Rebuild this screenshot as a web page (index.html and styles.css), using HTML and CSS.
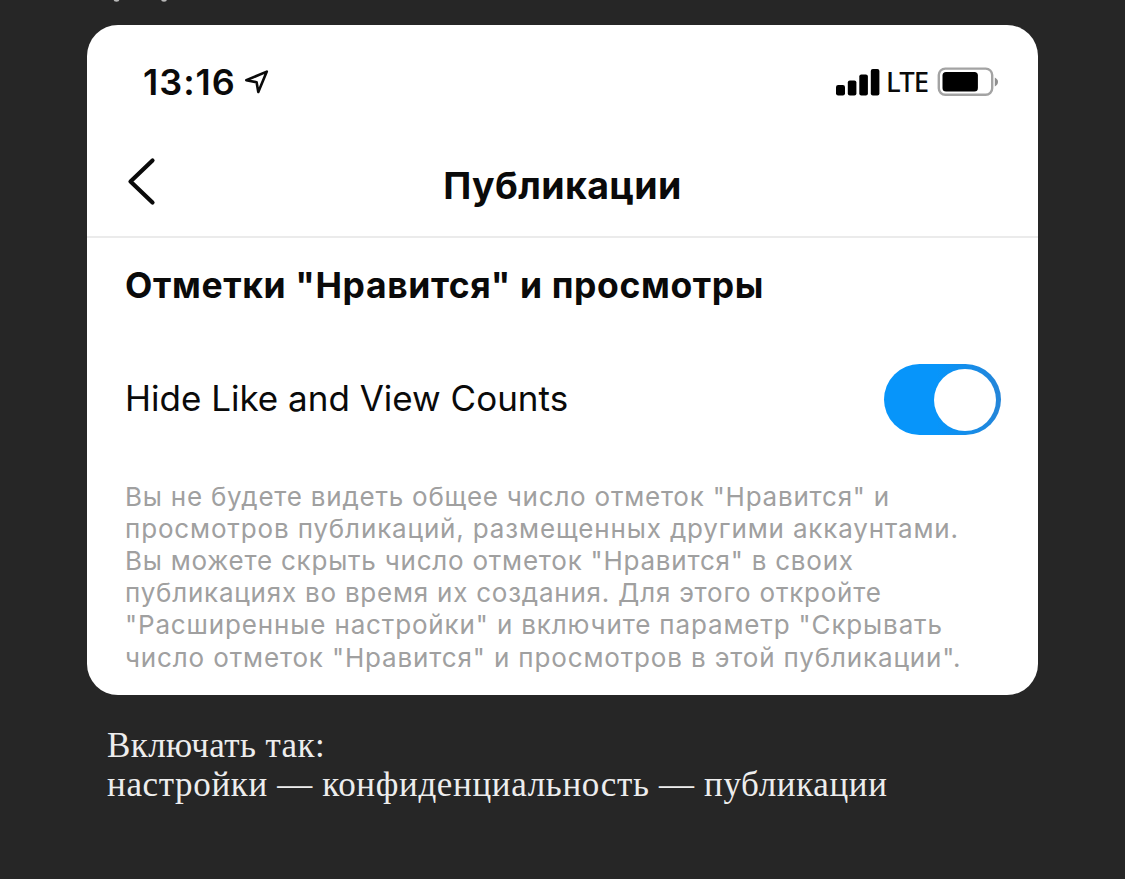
FILE: index.html
```
<!DOCTYPE html>
<html lang="ru">

<head>
    <meta charset="UTF-8">
    <meta name="viewport" content="width=device-width, initial-scale=1.0">
    <title>Публикации</title>
    <link rel="stylesheet" href="styles.css">
</head>

<body>
    <svg class="marks" viewBox="0 0 60 4">
        <ellipse cx="6.5" cy="0" rx="2.8" ry="1.8" />
        <ellipse cx="54" cy="0" rx="2.8" ry="1.8" />
    </svg>

    <main class="card">
        <div class="status">
            <span class="time">13:16</span>
            <svg class="location" viewBox="0 0 26 26">
                <path d="M2.3 11.2 L22.8 2.6 L14.3 23 L12.6 13.2 Z" />
            </svg>
            <svg class="signal" viewBox="0 0 44 28">
                <rect x="0" y="17" width="9" height="10.5" rx="2.2" />
                <rect x="11.8" y="12.6" width="8.6" height="14.9" rx="2" />
                <rect x="23.3" y="6.6" width="8.6" height="20.9" rx="2" />
                <rect x="34.8" y="1" width="8.6" height="26.5" rx="2" />
            </svg>
            <span class="network">LTE</span>
            <svg class="battery" viewBox="0 0 62 30">
                <rect class="battery-case" x="1.8" y="1.6" width="53.4" height="26.2" rx="6.5" />
                <rect x="5.5" y="5" width="35.4" height="19.4" rx="3.5" />
                <path class="battery-tip" d="M57.8 10.6 Q61 12.2 61 15 Q61 17.8 57.8 19.4 Z" />
            </svg>
        </div>

        <header class="navbar">
            <svg class="back" viewBox="0 0 30 50">
                <path d="M25.5 3.5 L3.5 24.5 L25.5 45.5" />
            </svg>
            <h1 class="title">Публикации</h1>
        </header>

        <section class="settings">
            <h2 class="subtitle">Отметки "Нравится" и просмотры</h2>
            <div class="option">
                <span class="option-name">Hide Like and View Counts</span>
                <span class="switch"><span class="knob"></span></span>
            </div>
            <p class="hint">
                Вы не будете видеть общее число отметок "Нравится" и<br>
                <span class="wide">просмотров публикаций, размещенных другими аккаунтами.</span><br>
                Вы можете скрыть число отметок "Нравится" в своих<br>
                публикациях во время их создания. Для этого откройте<br>
                <span class="wide">"Расширенные настройки" и включите параметр "Скрывать</span><br>
                <span class="wide">число отметок "Нравится" и просмотров в этой публикации".</span>
            </p>
        </section>
    </main>

    <p class="caption">
        Включать так:<br>
        <span class="path">настройки — конфиденциальность — публикации</span>
    </p>
</body>

</html>
```

FILE: styles.css
```
* {
    box-sizing: border-box;
}

body {
    margin: 0;
    height: 879px;
    overflow: hidden;
    background: #262626;
    font-family: Inter, "Liberation Sans", sans-serif;
    color: #0a0a0a;
}

.marks {
    display: block;
    width: 60px;
    height: 4px;
    margin-left: 110px;
    fill: #b8b8b8;
}

.card {
    width: 951px;
    height: 670.5px;
    margin: 20.5px 0 0 87px;
    border-radius: 31px;
    background: #fff;
    white-space: nowrap;
}

.status {
    display: flex;
    align-items: center;
    height: 114px;
    padding: 0 39px 0 56px;
}

.time {
    font-size: 36px;
    font-weight: 600;
    letter-spacing: 1px;
}

.location {
    width: 26px;
    height: 26px;
    margin-left: 8.5px;
    fill: none;
    stroke: #0a0a0a;
    stroke-width: 2.6;
    stroke-linejoin: round;
}

.signal {
    width: 44px;
    height: 28px;
    margin-left: auto;
    fill: #000;
}

.network {
    margin-left: 6px;
    font-family: "Noto Sans", sans-serif;
    font-size: 27.5px;
    font-weight: 500;
    letter-spacing: -1px;
}

.battery {
    width: 62px;
    height: 30px;
    margin-left: 9px;
}

.battery-case {
    fill: none;
    stroke: #a3a3a3;
    stroke-width: 2.4;
}

.battery-tip {
    fill: #8f8f8f;
}

.navbar {
    display: grid;
    grid-template-columns: 110px 1fr 110px;
    align-items: center;
    height: 99px;
    border-bottom: 2px solid #ebebeb;
}

.back {
    width: 30px;
    height: 50px;
    margin: -10px 0 0 40px;
    fill: none;
    stroke: #0a0a0a;
    stroke-width: 4.2;
    stroke-linecap: round;
    stroke-linejoin: round;
}

.title {
    margin: -4px 0 0;
    text-align: center;
    font-size: 37.5px;
    font-weight: 700;
    letter-spacing: 0.35px;
}

.settings {
    padding: 23px 37px 0 38px;
}

.subtitle {
    margin: 0;
    font-size: 35.5px;
    line-height: 49px;
    font-weight: 700;
    letter-spacing: 0.62px;
}

.option {
    display: flex;
    align-items: center;
    justify-content: space-between;
    height: 72px;
    margin-top: 54px;
}

.option-name {
    padding-bottom: 4px;
    font-size: 35px;
}

.switch {
    display: flex;
    justify-content: flex-end;
    width: 117px;
    height: 71px;
    padding: 4.5px 5px;
    border-radius: 36px;
    background: linear-gradient(90deg, #0795fa 45%, #2585d8);
}

.knob {
    width: 62px;
    height: 62px;
    border-radius: 50%;
    background: #fff;
}

.hint {
    margin: 45px 0 0;
    font-size: 26px;
    line-height: 32.2px;
    letter-spacing: 0.77px;
    color: #a0a0a0;
}

.wide {
    letter-spacing: 0.85px;
}

.caption {
    margin: 30.5px 0 0 107px;
    font-family: "Liberation Serif", serif;
    font-size: 35px;
    line-height: 39.5px;
    letter-spacing: 0.4px;
    color: #ededed;
    white-space: nowrap;
}

.path {
    letter-spacing: 0.65px;
}
```
